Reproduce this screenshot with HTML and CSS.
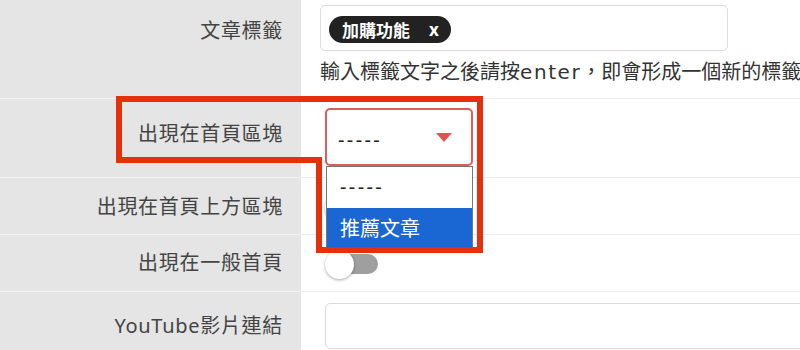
FILE: index.html
```html
<!DOCTYPE html>
<html lang="zh-Hant">
<head>
<meta charset="utf-8">
<link rel="stylesheet" href="styles.css">
</head>
<body>
<div class="form">
  <div class="row">
    <div class="label label--r1">文章標籤</div>
    <div class="field field--tags">
      <div class="tag-input">
        <span class="tag"><span class="tag-text">加購功能</span><span class="tag-x">x</span></span>
      </div>
      <div class="help">輸入標籤文字之後請按<span class="latin">enter</span>，即會形成一個新的標籤</div>
    </div>
  </div>
  <div class="row">
    <div class="label label--r2">出現在首頁區塊</div>
    <div class="field field--select">
      <div class="select-wrap">
        <div class="select">
          <span class="select-value">-----</span>
          <span class="select-arrow"></span>
        </div>
        <div class="dropdown">
          <div class="option option--dash">-----</div>
          <div class="option option--active">推薦文章</div>
        </div>
      </div>
    </div>
  </div>
  <div class="row">
    <div class="label label--r3">出現在首頁上方區塊</div>
    <div class="field field--switch">
      <span class="switch"><span class="switch-track"></span><span class="switch-knob"></span></span>
    </div>
  </div>
  <div class="row">
    <div class="label label--r4">出現在一般首頁</div>
    <div class="field field--switch">
      <span class="switch"><span class="switch-track"></span><span class="switch-knob"></span></span>
    </div>
  </div>
  <div class="row row--last">
    <div class="label label--r5">YouTube影片連結</div>
    <div class="field field--text">
      <div class="text-input"></div>
    </div>
  </div>
</div>
<svg class="annotation" width="800" height="350" viewBox="0 0 800 350">
  <path d="M119 99 H480 V250 H319 V160 H119 Z" fill="none" stroke="#e6300c" stroke-width="6" stroke-linejoin="miter"/>
</svg>
</body>
</html>
```
FILE: styles.css
```css
html, body {
  margin: 0;
  padding: 0;
  width: 800px;
  height: 350px;
  overflow: hidden;
  background: #ffffff;
}
body {
  position: relative;
  font-family: "Noto Sans", "Noto Sans CJK TC", sans-serif;
  font-size: 20px;
  line-height: 28px;
  color: #333;
}
.form {
  display: flex;
  flex-direction: column;
  height: 350px;
  overflow: hidden;
}
.row {
  display: flex;
  align-items: stretch;
  flex: none;
}
.label {
  box-sizing: border-box;
  width: 301px;
  flex: none;
  background: #e5e5e5;
  color: #444;
  text-align: right;
  padding-right: 18px;
  letter-spacing: 0.7px;
  border-bottom: 1px solid #f3f3f3;
  white-space: nowrap;
}
.label--r1 { padding-top: 17px; }
.label--r2 { padding-top: 21px; }
.label--r3 { padding-top: 15px; }
.label--r4 { padding-top: 14px; }
.label--r5 { padding-top: 20px; }
.field {
  flex: 1;
  min-width: 0;
  box-sizing: border-box;
  padding-left: 24px;
  border-bottom: 1px solid #ececec;
  white-space: nowrap;
  overflow: hidden;
}
.field--tags {
  padding-left: 19px;
  padding-top: 5px;
  height: 99px;
}
.tag-input {
  box-sizing: border-box;
  width: 408px;
  height: 46px;
  border: 1px solid #dcdcdc;
  border-radius: 5px;
  padding: 10px 8px 0;
  display: flex;
  align-items: flex-start;
}
.tag {
  display: inline-flex;
  align-items: center;
  height: 27px;
  border-radius: 14px;
  background: #222;
  color: #fff;
  font-weight: 700;
  font-size: 17px;
  padding: 0 12px 0 13px;
  gap: 19px;
}
.tag-text {
  font-family: "Noto Sans CJK TC", sans-serif;
  line-height: 27px;
}
.tag-x {
  line-height: 27px;
}
.help {
  margin-top: 7px;
  color: #333;
}
.latin {
  font-family: "DejaVu Sans", sans-serif;
  letter-spacing: 1.6px;
}
.field--select {
  padding-top: 9px;
  height: 79px;
  overflow: visible;
}
.select-wrap {
  position: relative;
  width: 148px;
}
.select {
  box-sizing: border-box;
  width: 148px;
  height: 58px;
  border: 2px solid #df5c5c;
  border-radius: 5px;
  display: flex;
  align-items: center;
  justify-content: space-between;
  padding: 6px 19px 0 11px;
}
.select-value {
  letter-spacing: 2.4px;
  color: #222;
}
.select-arrow {
  width: 0;
  height: 0;
  border-left: 8px solid transparent;
  border-right: 8px solid transparent;
  border-top: 9px solid #e05252;
  margin-top: -6px;
}
.dropdown {
  position: absolute;
  left: 1px;
  top: 58px;
  width: 147px;
  box-sizing: border-box;
  border: 1px solid #767676;
  background: #fff;
  z-index: 2;
}
.option {
  height: 40px;
  line-height: 40px;
  padding-left: 13px;
  color: #222;
}
.option--dash {
  height: 41px;
  letter-spacing: 2.4px;
}
.option--active {
  background: #1a66d2;
  color: #fff;
  font-family: "Noto Sans CJK TC", sans-serif;
}
.field--switch {
  height: 57px;
  display: flex;
  align-items: center;
  overflow: visible;
}
.switch {
  position: relative;
  width: 53px;
  height: 28px;
  display: inline-block;
  margin-top: 1px;
}
.switch-track {
  position: absolute;
  left: 5px;
  right: 0;
  top: 4px;
  height: 20px;
  border-radius: 10px;
  background: #9f9f9f;
}
.switch-knob {
  position: absolute;
  left: 0;
  top: 0;
  width: 29px;
  height: 29px;
  border-radius: 50%;
  background: #fff;
  box-shadow: 0 1px 3px rgba(0, 0, 0, 0.35);
}
.field--text {
  padding-top: 11px;
  height: 58px;
  border-bottom: none;
}
.row--last .label {
  border-bottom: none;
}
.text-input {
  box-sizing: border-box;
  width: 520px;
  height: 46px;
  border: 1px solid #dcdcdc;
  border-radius: 5px;
}
.annotation {
  position: absolute;
  left: 0;
  top: 0;
  pointer-events: none;
  z-index: 5;
}
```
